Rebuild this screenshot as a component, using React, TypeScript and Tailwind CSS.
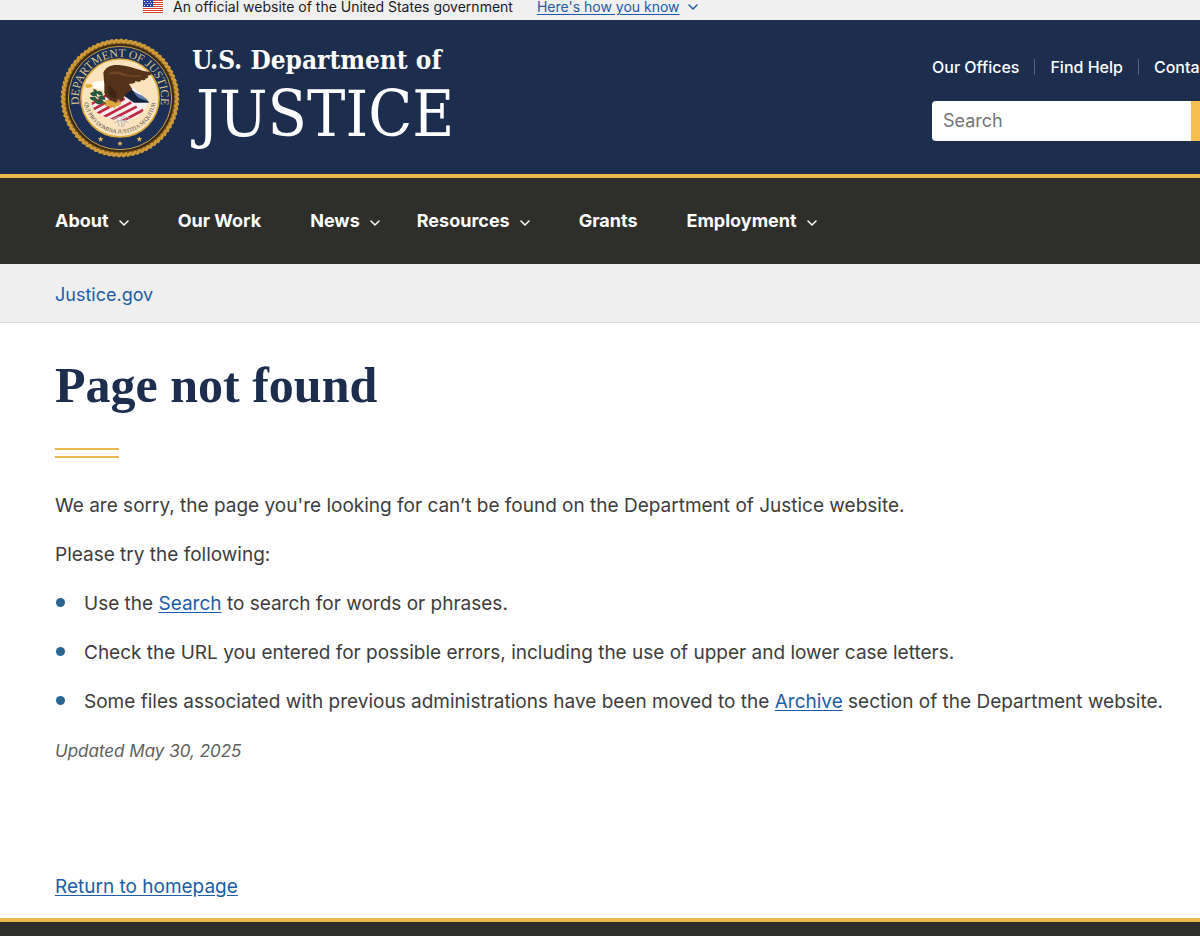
import React from "react";

type NavItem = { label: string; menu: boolean; spacing?: string };

const navItems: NavItem[] = [
  { label: "About", menu: true },
  { label: "Our Work", menu: false },
  { label: "News", menu: true, spacing: "-mr-3" },
  { label: "Resources", menu: true },
  { label: "Grants", menu: false },
  { label: "Employment", menu: true },
];

function Chevron() {
  return (
    <svg width="10" height="6" viewBox="0 0 10 6" fill="none" stroke="currentColor" strokeWidth="1.5" strokeLinecap="round" strokeLinejoin="round" aria-hidden="true">
      <path d="M1 1l4 4 4-4" />
    </svg>
  );
}

function Flag() {
  return (
    <svg width="20" height="13" viewBox="0 0 20 13" aria-hidden="true" className="shrink-0">
      <path fill="#fff" d="M0 0h20v13H0z" />
      <path fill="#d8412f" d="M0 0h20v1H0zM0 2h20v1H0zM0 4h20v1H0zM0 6h20v1H0zM0 8h20v1H0zM0 10h20v1H0zM0 12h20v1H0z" />
      <path fill="#2b3fa8" d="M0 0h10v7H0z" />
      <path fill="#fff" d="M1 1h1v1H1zM4 1h1v1H4zM7 1h1v1H7zM2.5 3h1v1h-1zM5.500 3h1v1h-1zM8 3h1v1H8zM1 5h1v1H1zM4 5h1v1H4zM7 5h1v1H7z" />
    </svg>
  );
}

const star = "M0-9l2.200 6h6.400l-5.100 4 1.900 6.200L0 3.600l-5.400 3.600 1.900-6.200-5.100-4h6.400z";
const ropeStrands = Array.from({ length: 76 }, (_, i) => (i * 360) / 76);

function Seal() {
  return (
    <svg viewBox="30 22 360 360" className="size-[120px] shrink-0" role="img" aria-label="Department of Justice seal">
      <defs>
        <path id="ringArc" d="M 94.500 244 A 123 123 0 1 1 325.500 244" />
        <path id="mottoArc" d="M 103 190 A 107.500 107.500 0 1 0 317 190" />
        <clipPath id="shieldClip">
          <path d="M124 216L166 190L260 205L292 214C288 238 268 258 243 266C220 274 190 270 160 256C140 248 128 236 124 216Z" />
        </clipPath>
      </defs>
      <circle cx="210" cy="202" r="175" fill="#80571b" />
      {ropeStrands.map((angle) => (
        <ellipse key={angle} cx="210" cy="31" rx="10" ry="5" fill="#cf9b3a" transform={`rotate(${angle} 210 202) rotate(-32 210 31)`} />
      ))}
      <circle cx="210" cy="202" r="162" fill="#3b2a17" />
      <circle cx="210" cy="202" r="155" fill="#1b2f57" stroke="#c9a24a" strokeWidth="3" />
      <circle cx="210" cy="202" r="117" fill="#fbe3bd" stroke="#dca93d" strokeWidth="5" />
      <text fontFamily="'Liberation Serif', serif" fontSize="35" fill="#d9c68c">
        <textPath href="#ringArc" startOffset="50%" textAnchor="middle">DEPARTMENT OF JUSTICE</textPath>
      </text>
      <g fill="#e8bb55">
        <path transform="translate(152 326)" d={star} />
        <path transform="translate(210 339)" d={star} />
        <path transform="translate(268 326)" d={star} />
      </g>
      <g clipPath="url(#shieldClip)">
        <path fill="#f6edf0" d="M110 180h200v100H110z" />
        <g stroke="#c3273f" strokeWidth="8">
          <path d="M112 227l66-38M120 242l90-50M134 253l90-49M156 262l88-47M182 268l78-40M208 276l72-38" />
        </g>
      </g>
      <path fill="#eef0f3" d="M214 190L246 166L288 204L298 216L262 216Z" />
      <path fill="#14233f" d="M214 190L238 166C250 188 266 190 288 204L298 216L252 216Z" />
      <path fill="#5f7fb0" d="M250 185l28 10 14 16-26-9z" />
      <g stroke="#b4b7c0" strokeWidth="3" fill="none">
        <path d="M186 268c8-12 44-14 58-2M194 278c10-12 32-12 42 0M202 266l6 22M214 262l2 28M228 264l-8 24" />
      </g>
      <path fill="#55331a" d="M163 164L160 126C168 107 188 101 212 104C244 107 270 121 308 126C303 134 299 133 292 136C298 141 292 144 286 143C289 150 280 150 273 147C274 155 263 154 255 151C259 160 246 158 237 160L247 175L241 182C233 180 228 192 220 202C217 210 213 214 207 206L196 216L185 211L173 203C165 197 160 184 163 164Z" />
      <path fill="#704524" d="M172 133c12-14 36-12 52-4 20 8 36 4 55 5-12 8-35 6-51 3-18-4-35-11-56-4z" />
      <path fill="#3e2515" d="M180 162c5 12 12 18 20 23l-3 21-16-11c-8-8-7-20-1-33z" />
      <path fill="#fffdf6" d="M121 163c8-10 24-13 41-13l1 31c-11-3-19-10-30-9-9 0-9-5-12-9z" />
      <path fill="#e3b23e" d="M108 160l18 1 2 8-16 3-7-3z" />
      <path fill="#d9a93b" d="M163 213c8-8 14-5 21-2l13 6 11-6 7 9-9 3 4 6-11-3-6 9-6-9-10 8 2-10-12 4z" />
      <g fill="#28593d">
        <path d="M120 188c12-10 21-3 21 8-12 2-18 0-21-8zM138 184c14-8 22 3 20 12-11-1-16-5-20-12zM119 200c16-6 24 2 22 10-13 3-20-2-22-10zM135 213c9-10 24-8 26 0-9 11-20 10-26 0zM145 198c12-6 22 2 21 10-12 0-19-4-21-10zM130 175c9 0 14 7 12 14-9-2-12-7-12-14z" />
        <path d="M132 190l36 30" stroke="#28593d" strokeWidth="3" />
      </g>
      <text fontFamily="'Liberation Serif', serif" fontSize="17" fill="#4c4a47">
        <textPath href="#mottoArc" startOffset="50%" textAnchor="middle">QUI PRO DOMINA JUSTITIA SEQUITUR</textPath>
      </text>
    </svg>
  );
}

const link = "text-[#205da6] underline underline-offset-2";

function Bullet() {
  return <span className="mr-[19px] mb-1 ml-px size-[9px] shrink-0 rounded-full bg-[#2a6590]" />;
}

export default function App() {
  return (
    <div className="flex min-h-screen flex-col overflow-x-hidden bg-white font-['Inter',sans-serif] text-[#3d3d3d]">
      <section aria-label="Official government website" className="flex h-5 items-start bg-[#f0f0f0] pl-[143px] text-sm leading-[14px] whitespace-nowrap text-[#1b1b1b]">
        <Flag />
        <p className="ml-[10px]">An official website of the United States government</p>
        <button type="button" className="ml-6 flex items-center gap-2 text-[#205da6]">
          <span className="underline underline-offset-2">Here's how you know</span>
          <Chevron />
        </button>
      </section>

      <header>
        <div className="flex h-[158px] items-start border-b-4 border-[#edb84b] bg-[#1c2d4d] pt-[18px] pl-[60px] text-white">
          <a href="/" className="flex whitespace-nowrap font-['DejaVu_Serif_Condensed','DejaVu_Serif',serif]">
            <Seal />
            <span className="flex flex-col pt-2 pl-3">
              <span className="text-[26px] leading-7 font-bold">U.S. Department of</span>
              <span className="pt-[2px] pl-1 text-[64px] leading-[76px]">JUSTICE</span>
            </span>
          </a>
          <div className="ml-auto w-[268px] shrink-0 overflow-hidden pt-[17px]">
            <nav aria-label="Secondary" className="flex items-center text-base leading-6 font-medium whitespace-nowrap">
              <a href="/offices">Our Offices</a>
              <span className="mx-[15px] h-4 w-px shrink-0 bg-[#52617d]" />
              <a href="/help">Find Help</a>
              <span className="mx-[15px] h-4 w-px shrink-0 bg-[#52617d]" />
              <a href="/contact">Contact Us</a>
            </nav>
            <form className="mt-[22px] flex h-10" role="search">
              <input type="search" aria-label="Search" placeholder="Search" className="w-[259px] shrink-0 rounded-l-[4px] bg-white px-[11px] text-lg text-[#1b1b1b] placeholder:text-[#757575]" />
              <button type="submit" aria-label="Submit search" className="grow bg-[#f5bf4f]" />
            </form>
          </div>
        </div>

        <nav aria-label="Primary" className="flex h-[86px] items-center gap-[49px] bg-[#2e2e2a] pl-[55px] text-lg leading-6 font-bold whitespace-nowrap text-white">
          {navItems.map((item) =>
            item.menu ? (
              <button key={item.label} type="button" className={`flex items-center gap-[10px] ${item.spacing ?? ""}`}>
                {item.label}
                <span className="pt-1"><Chevron /></span>
              </button>
            ) : (
              <a key={item.label} href="/">{item.label}</a>
            )
          )}
        </nav>
      </header>

      <nav aria-label="Breadcrumb" className="flex h-[59px] items-center border-b border-[#dcdcdc] bg-[#efefef] pt-1 pl-[55px] text-lg">
        <a href="/" className="text-[#205da6]">Justice.gov</a>
      </nav>

      <main className="pl-[55px] text-[19px] leading-8">
        <h1 className="pt-[30px] font-['Liberation_Serif',serif] text-[50px] leading-[64px] font-bold text-[#1c2d4d]">Page not found</h1>
        <div className="mt-[31px] h-[10px] w-16 border-y-2 border-[#edb84b]" />
        <div className="flex flex-col gap-[17px] pt-8">
          <p>We are sorry, the page you're looking for can’t be found on the Department of Justice website.</p>
          <p>Please try the following:</p>
          <ul className="flex flex-col gap-[17px]">
            <li className="flex items-center"><Bullet /><span>Use the <a href="/search" className={link}>Search</a> to search for words or phrases.</span></li>
            <li className="flex items-center"><Bullet /><span>Check the URL you entered for possible errors, including the use of upper and lower case letters.</span></li>
            <li className="flex items-center"><Bullet /><span>Some files associated with previous administrations have been moved to the <a href="/archive" className={link}>Archive</a> section of the Department website.</span></li>
          </ul>
          <p className="text-[17px] leading-8 text-[#5e5e5e] italic">Updated May 30, 2025</p>
        </div>
        <p className="pt-[104px] pb-[15px]"><a href="/" className={link}>Return to homepage</a></p>
      </main>

      <footer className="min-h-[18px] grow border-t-4 border-[#edb84b] bg-[#2e2e2a]" />
    </div>
  );
}
